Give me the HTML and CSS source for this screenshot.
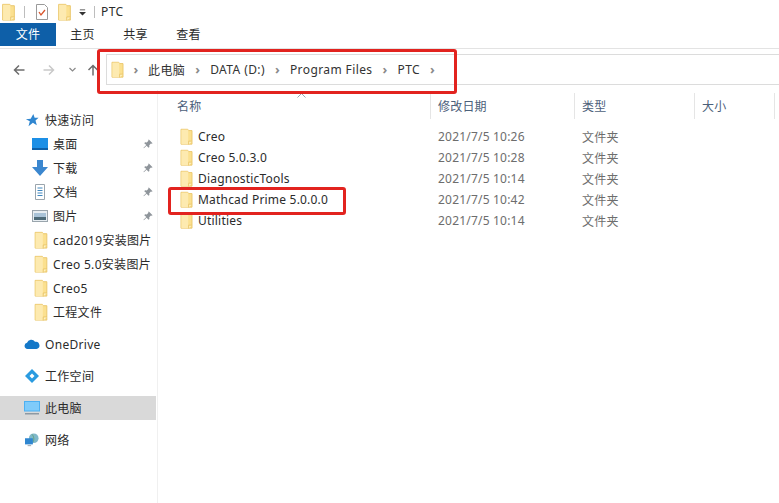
FILE: index.html
```html
<!DOCTYPE html>
<html lang="zh-CN">
<head>
  <meta charset="UTF-8" />
  <title>PTC</title>
  <link rel="stylesheet" href="styles.css">
</head>
<body>
  <svg class="defs" width="0" height="0">
    <symbol id="folder" viewBox="0 0 14 20">
      <path d="M.5 1.500h8l1 1.500h4v16H.5z" fill="#fbe08f" stroke="#e9c468"/>
      <rect x="1" y="2" width="8" height="17" fill="#fdeab0"/>
      <path d="M9.500 19.500v-4h4" fill="#fff3c4" stroke="#e9c468"/>
    </symbol>
    <symbol id="pin" viewBox="0 0 12 12">
      <path d="M7 .5l4.500 4.500-1 .8-1-.3-2 2 .2 2-1 1-2.400-2.500L1 11l-.4-.4 3.400-3.300L1.500 5l1-1 2 .2 2-2-.3-1z" fill="#8f959b"/>
    </symbol>
  </svg>

  <div class="titlebar">
    <svg class="qa-folder"><use href="#folder"/></svg>
    <span class="qa-sep"></span>
    <svg class="qa-check" viewBox="0 0 12 16">
      <path d="M.5.5h8l3 3v12H.5z" fill="#fff" stroke="#9a9a9a"/>
      <path d="M3 8l2 3 4-5" fill="none" stroke="#d9542b" stroke-width="1.300"/>
    </svg>
    <svg class="qa-folder"><use href="#folder"/></svg>
    <svg class="qa-drop" viewBox="0 0 8 7">
      <path d="M1 0h6v1H1zM0 3h8L4 7z" fill="#333"/>
    </svg>
    <span class="qa-sep"></span>
    <span class="title">PTC</span>
  </div>

  <div class="tabs">
    <span class="tab tab-file">文件</span>
    <span class="tab">主页</span>
    <span class="tab">共享</span>
    <span class="tab">查看</span>
  </div>

  <div class="navbar">
    <svg class="nav-back" viewBox="0 0 12 12"><path d="M11.500 6H1.500M6 1.500L1.500 6 6 10.500" fill="none" stroke="#6d6d6d" stroke-width="1.500"/></svg>
    <svg class="nav-forward" viewBox="0 0 12 12"><path d="M.5 6h10M6 1.500L10.500 6 6 10.500" fill="none" stroke="#c9c9c9" stroke-width="1.500"/></svg>
    <svg class="nav-down" viewBox="0 0 7 5"><path d="M.5 1L3.500 4 6.500 1" fill="none" stroke="#8a8a8a" stroke-width="1.200"/></svg>
    <svg class="nav-up" viewBox="0 0 12 12"><path d="M6 11.500V1.500M1.500 6L6 1.500 10.500 6" fill="none" stroke="#6d6d6d" stroke-width="1.500"/></svg>
    <div class="address">
      <svg class="addr-folder"><use href="#folder"/></svg>
      <span class="crumb-arrow">›</span><span class="crumb">此电脑</span>
      <span class="crumb-arrow">›</span><span class="crumb">DATA (D:)</span>
      <span class="crumb-arrow">›</span><span class="crumb">Program Files</span>
      <span class="crumb-arrow">›</span><span class="crumb">PTC</span>
      <span class="crumb-arrow">›</span>
    </div>
  </div>

  <div class="main">
    <nav class="sidebar">
      <div class="side-row side-top">
        <svg class="side-icon" viewBox="0 0 16 16"><path d="M9.500 1l1.500 4.500h4.500L12 8.500l1.500 5.500-4.500-3-5 4 1.500-5.500L1 7l5.500-.5z" fill="#2f86d0"/></svg>
        <span>快速访问</span>
      </div>
      <div class="side-row side-sub">
        <svg class="side-icon" viewBox="0 0 16 12"><rect width="16" height="12" fill="#1c8fe6"/><rect y="10" width="16" height="2" fill="#0d5fa8"/></svg>
        <span class="side-label">桌面</span>
        <svg class="pin"><use href="#pin"/></svg>
      </div>
      <div class="side-row side-sub">
        <svg class="side-icon" viewBox="0 0 16 16"><path d="M5 0h6v7h5l-8 9-8-9h5z" fill="#3b87cf"/></svg>
        <span class="side-label">下载</span>
        <svg class="pin"><use href="#pin"/></svg>
      </div>
      <div class="side-row side-sub">
        <svg class="side-icon" viewBox="0 0 16 16"><path d="M3.500.5h9v15h-9z" fill="#fff" stroke="#9aa5ad"/><path d="M5.500 4h5M5.500 6.500h5M5.500 9h5M5.500 11.500h5" stroke="#3f87bf"/></svg>
        <span class="side-label">文档</span>
        <svg class="pin"><use href="#pin"/></svg>
      </div>
      <div class="side-row side-sub">
        <svg class="side-icon" viewBox="0 0 16 12"><rect x=".5" y=".5" width="15" height="11" fill="#e8eef2" stroke="#9aa5ad"/><rect x="2" y="3" width="12" height="4" fill="#a9c3d8"/><rect x="2" y="7" width="12" height="3" fill="#4d6a78"/></svg>
        <span class="side-label">图片</span>
        <svg class="pin"><use href="#pin"/></svg>
      </div>
      <div class="side-row side-sub side-folder"><svg class="side-icon"><use href="#folder"/></svg><span class="side-label">cad2019安装图片</span></div>
      <div class="side-row side-sub side-folder"><svg class="side-icon"><use href="#folder"/></svg><span class="side-label">Creo 5.0安装图片</span></div>
      <div class="side-row side-sub side-folder"><svg class="side-icon"><use href="#folder"/></svg><span class="side-label">Creo5</span></div>
      <div class="side-row side-sub side-folder"><svg class="side-icon"><use href="#folder"/></svg><span class="side-label">工程文件</span></div>

      <div class="side-row side-top side-gap">
        <svg class="side-icon" viewBox="0 0 16 10"><path d="M3.500 10A3.200 3.200 0 0 1 3 3.700 4.500 4.500 0 0 1 11 2.800 3.600 3.600 0 0 1 12.500 10z" fill="#1478c8"/></svg>
        <span>OneDrive</span>
      </div>
      <div class="side-row side-top side-gap">
        <svg class="side-icon" viewBox="0 0 16 14"><path d="M8 0l7 7-7 7-7-7z" fill="#2a9be0"/><path d="M8 4.500L10.500 7 8 9.500 5.500 7z" fill="#fff"/></svg>
        <span>工作空间</span>
      </div>
      <div class="side-row side-top side-gap side-active">
        <svg class="side-icon" viewBox="0 0 16 14"><rect width="16" height="10.500" fill="#4db0f2"/><rect x="1" y="1" width="14" height="8.500" fill="#7fcbfa"/><rect x="1" y="12" width="14" height="1.500" fill="#8d99a3"/></svg>
        <span>此电脑</span>
      </div>
      <div class="side-row side-top side-gap">
        <svg class="side-icon" viewBox="0 0 16 16"><circle cx="10" cy="6" r="5.500" fill="#7fb8c9"/><path d="M8 1.500c2 2 3 6 1 9" fill="none" stroke="#5f9f7a"/><rect y="6" width="9" height="7" fill="#2f86d0"/><rect x="3" y="14" width="4" height="1" fill="#8d99a3"/></svg>
        <span>网络</span>
      </div>
    </nav>

    <section class="files">
      <div class="file-head">
        <span class="col-name">名称</span>
        <span class="col-date">修改日期</span>
        <span class="col-type">类型</span>
        <span class="col-size">大小</span>
        <svg class="sort-caret" viewBox="0 0 9 5"><path d="M.5 4.500L4.500.5l4 4" fill="none" stroke="#9aa5b1"/></svg>
      </div>
      <div class="file-row"><span class="col-name"><svg class="file-icon"><use href="#folder"/></svg>Creo</span><span class="col-date">2021/7/5 10:26</span><span class="col-type">文件夹</span></div>
      <div class="file-row"><span class="col-name"><svg class="file-icon"><use href="#folder"/></svg>Creo 5.0.3.0</span><span class="col-date">2021/7/5 10:28</span><span class="col-type">文件夹</span></div>
      <div class="file-row"><span class="col-name"><svg class="file-icon"><use href="#folder"/></svg>DiagnosticTools</span><span class="col-date">2021/7/5 10:14</span><span class="col-type">文件夹</span></div>
      <div class="file-row"><span class="col-name"><svg class="file-icon"><use href="#folder"/></svg>Mathcad Prime 5.0.0.0</span><span class="col-date">2021/7/5 10:42</span><span class="col-type">文件夹</span></div>
      <div class="file-row"><span class="col-name"><svg class="file-icon"><use href="#folder"/></svg>Utilities</span><span class="col-date">2021/7/5 10:14</span><span class="col-type">文件夹</span></div>
    </section>
  </div>

  <!-- red annotations drawn over the screenshot -->
  <div class="mark mark-address"></div>
  <div class="mark mark-file"></div>
</body>
</html>
```

FILE: styles.css
```css
* {
  box-sizing: border-box;
}

html, body {
  height: 100%;
}

body {
  margin: 0;
  width: 779px;
  height: 503px;
  overflow: hidden;
  position: relative;
  background: #fff;
  color: #2b2b2b;
  font-family: "Noto Sans", "Noto Sans CJK SC", sans-serif;
  font-size: 12px;
  letter-spacing: .2px;
}

.defs {
  position: absolute;
}

svg {
  display: block;
  flex: none;
}

/* title bar */
.titlebar {
  height: 23px;
  display: flex;
  align-items: center;
}

.qa-folder {
  width: 13px;
  height: 18px;
}

.titlebar .qa-folder:first-child {
  margin-left: 2px;
}

.qa-sep {
  width: 1px;
  height: 12px;
  background: #bdbdbd;
  margin: 0 10px 0 9px;
}

.qa-check {
  width: 12px;
  height: 16px;
  margin: 0 10px 0 1px;
}

.qa-drop {
  width: 7px;
  height: 7px;
  margin-left: 8px;
  margin-top: 2px;
}

.qa-drop + .qa-sep {
  margin: 0 6px 0 8px;
}

.title {
  letter-spacing: .4px;
}

/* ribbon tabs */
.tabs {
  height: 26px;
  display: flex;
  align-items: flex-start;
  border-bottom: 1px solid #e3e3e3;
}

.tab {
  width: 53px;
  height: 23px;
  line-height: 24px;
  text-align: center;
}

.tab-file {
  width: 56px;
  background: #0e5fa8;
  color: #fff;
}

/* nav bar */
.navbar {
  height: 41px;
  display: flex;
  align-items: center;
  padding: 0 0 0 13px;
}

.nav-back,
.nav-forward,
.nav-up {
  width: 12px;
  height: 12px;
}

.nav-forward {
  margin-left: 18px;
}

.nav-down {
  width: 7px;
  height: 5px;
  margin-left: 14px;
}

.nav-up {
  margin-left: 11px;
}

.address {
  flex: 1;
  height: 31px;
  margin-left: 7px;
  display: flex;
  align-items: center;
  border: 1px solid #dcdcdc;
  border-right: 0;
  padding-left: 4px;
  color: #333;
  letter-spacing: .4px;
}

.addr-folder {
  width: 13px;
  height: 17px;
}

.crumb-arrow {
  color: #8a8a8a;
  font-weight: bold;
  width: 24px;
  text-align: center;
  font-size: 13px;
  line-height: 1;
}

.crumb + .crumb-arrow {
  width: 25px;
}

/* main */
.main {
  display: flex;
  height: 413px;
}

.sidebar {
  width: 158px;
  padding-top: 18px;
  border-right: 1px solid #f0f0f0;
  letter-spacing: .3px;
}

.side-row {
  height: 24px;
  display: flex;
  align-items: center;
  position: relative;
}

.side-top {
  padding-left: 24px;
  gap: 5px;
}

.side-sub {
  padding-left: 32px;
}

.side-gap {
  margin-top: 8px;
}

.side-top .side-icon {
  width: 16px;
  height: 14px;
}

.side-sub .side-icon {
  width: 16px;
  height: 16px;
  margin-right: 5px;
}

.side-sub.side-folder .side-icon {
  width: 14px;
  height: 18px;
  margin: 0 5px 0 2px;
}

.side-active {
  background: #d9d9d9;
  margin-right: 1px;
}

.pin {
  width: 10px;
  height: 10px;
  position: absolute;
  right: 4px;
  top: 7px;
}

/* file list */
.files {
  flex: 1;
  padding-top: 3px;
}

.file-head {
  height: 26px;
  display: flex;
  align-items: center;
  color: #4c607a;
  margin-bottom: 7px;
  position: relative;
}

.file-head span {
  height: 26px;
  line-height: 27px;
  border-right: 1px solid #e5e5e5;
}

.sort-caret {
  position: absolute;
  left: 139px;
  top: 0;
  width: 9px;
  height: 5px;
}

.file-row {
  height: 21px;
  display: flex;
  align-items: center;
}

.col-name {
  width: 273px;
  padding-left: 19px;
  display: flex;
  align-items: center;
}

.col-date {
  width: 144px;
  padding-left: 7px;
}

.col-type {
  width: 120px;
  padding-left: 7px;
}

.col-size {
  width: 80px;
  padding-left: 7px;
}

.file-row .col-name {
  padding-left: 22px;
}

.file-row .col-date,
.file-row .col-type {
  color: #6d6d6d;
}

.file-icon {
  width: 13px;
  height: 17px;
  margin-right: 5px;
}

/* red boxes */
.mark {
  position: absolute;
  border: 3px solid #e2231f;
  border-radius: 3px;
}

.mark-address {
  left: 97px;
  top: 49px;
  width: 360px;
  height: 45px;
}

.mark-file {
  left: 168px;
  top: 187px;
  width: 178px;
  height: 28px;
}
```
